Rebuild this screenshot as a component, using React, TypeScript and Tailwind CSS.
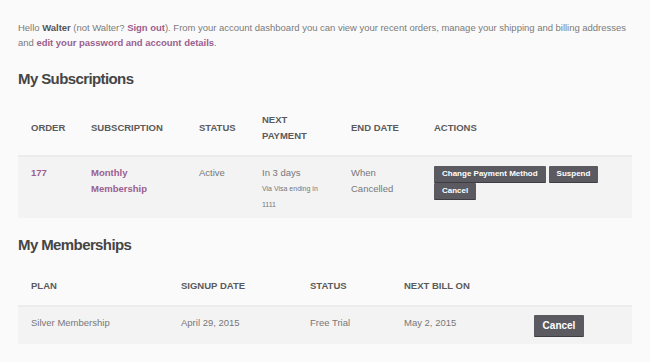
import React from 'react';

const link = 'text-[#9b5f8f] font-bold';

const Btn = ({ children, big = false }: { children: React.ReactNode; big?: boolean }) => (
  <button
    className={
      big
        ? 'bg-[#5b5a61] text-white font-bold text-[10px] leading-none px-[8px] h-[21px] w-[50px] rounded-[1px] shadow-[0_1px_0_#3e3d43]'
        : 'bg-[#5b5a61] text-white font-bold text-[8px] leading-none px-[8px] h-[16px] rounded-[1px] shadow-[0_1px_0_#3e3d43]'
    }
  >
    {children}
  </button>
);

const th = 'text-left align-middle px-[13px] py-[11px] text-[9.5px] leading-[16px] font-bold uppercase text-[#5a5a5a]';
const td = 'text-left align-top px-[13px] pt-[8px] text-[9.5px] leading-[16px] text-[#777777]';

const App = () => {
  return (
    <section className="min-h-screen w-[650px] h-[362px] bg-[#fafafb] px-[18px] pt-[20px] font-['Liberation_Sans',Arial,sans-serif] overflow-hidden">
      {/* intro */}
      <div className="text-[9.5px] leading-[15px] text-[#7a7a7a] tracking-[-0.02px]">
        <p className="whitespace-nowrap">
          Hello <span className="font-bold text-[#555]">Walter</span> (not Walter? <a className={link}>Sign out</a>).
          From your account dashboard you can view your recent orders, manage your shipping and billing addresses
        </p>
        <p>
          and <a className={link}>edit your password and account details</a>.
        </p>
      </div>

      <h2 className="mt-[19px] text-[15px] leading-[20px] font-bold text-[#454545] tracking-[-0.6px]">My Subscriptions</h2>

      <table className="mt-[12px] w-[614px] table-fixed border-collapse">
        <colgroup>
          <col className="w-[60px]" />
          <col className="w-[108px]" />
          <col className="w-[63px]" />
          <col className="w-[89px]" />
          <col className="w-[83px]" />
          <col />
        </colgroup>
        <thead>
          <tr className="border-b-2 border-[#ececee]">
            <th className={th}>Order</th>
            <th className={th}>Subscription</th>
            <th className={th}>Status</th>
            <th className={th}>
              Next
              <br />
              Payment
            </th>
            <th className={th}>End Date</th>
            <th className={th}>Actions</th>
          </tr>
        </thead>
        <tbody>
          <tr className="bg-[#f3f3f4]">
            <td className={td}>
              <a className={link}>177</a>
            </td>
            <td className={td}>
              <a className={link}>
                Monthly
                <br />
                Membership
              </a>
            </td>
            <td className={td}>Active</td>
            <td className={`${td} pb-[5px]`}>
              In 3 days
              <div className="text-[7px] leading-[16px]">Via Visa ending in</div>
              <div className="text-[7px] leading-[16px]">1111</div>
            </td>
            <td className={td}>
              When
              <br />
              Cancelled
            </td>
            <td className="align-top px-[13px] pt-[9px]">
              <div className="flex flex-wrap gap-x-[3px] gap-y-[1px] w-[180px]">
                <Btn>Change Payment Method</Btn>
                <Btn>Suspend</Btn>
                <Btn>Cancel</Btn>
              </div>
            </td>
          </tr>
        </tbody>
      </table>

      <h2 className="mt-[17px] text-[15px] leading-[20px] font-bold text-[#454545] tracking-[-0.6px]">My Memberships</h2>

      <table className="mt-[12px] w-[614px] table-fixed border-collapse">
        <colgroup>
          <col className="w-[150px]" />
          <col className="w-[129px]" />
          <col className="w-[94px]" />
          <col className="w-[130px]" />
          <col />
        </colgroup>
        <thead>
          <tr className="border-b-2 border-[#ececee]">
            <th className={th}>Plan</th>
            <th className={th}>Signup Date</th>
            <th className={th}>Status</th>
            <th className={th}>Next Bill On</th>
            <th className={th}></th>
          </tr>
        </thead>
        <tbody>
          <tr className="bg-[#f3f3f4]">
            <td className={td}>Silver Membership</td>
            <td className={td}>April 29, 2015</td>
            <td className={td}>Free Trial</td>
            <td className={td}>May 2, 2015</td>
            <td className="align-top px-[13px] pt-[8px] pb-[8px]">
              <div className="flex">
                <Btn big>Cancel</Btn>
              </div>
            </td>
          </tr>
        </tbody>
      </table>
    </section>
  );
};

export default App;
